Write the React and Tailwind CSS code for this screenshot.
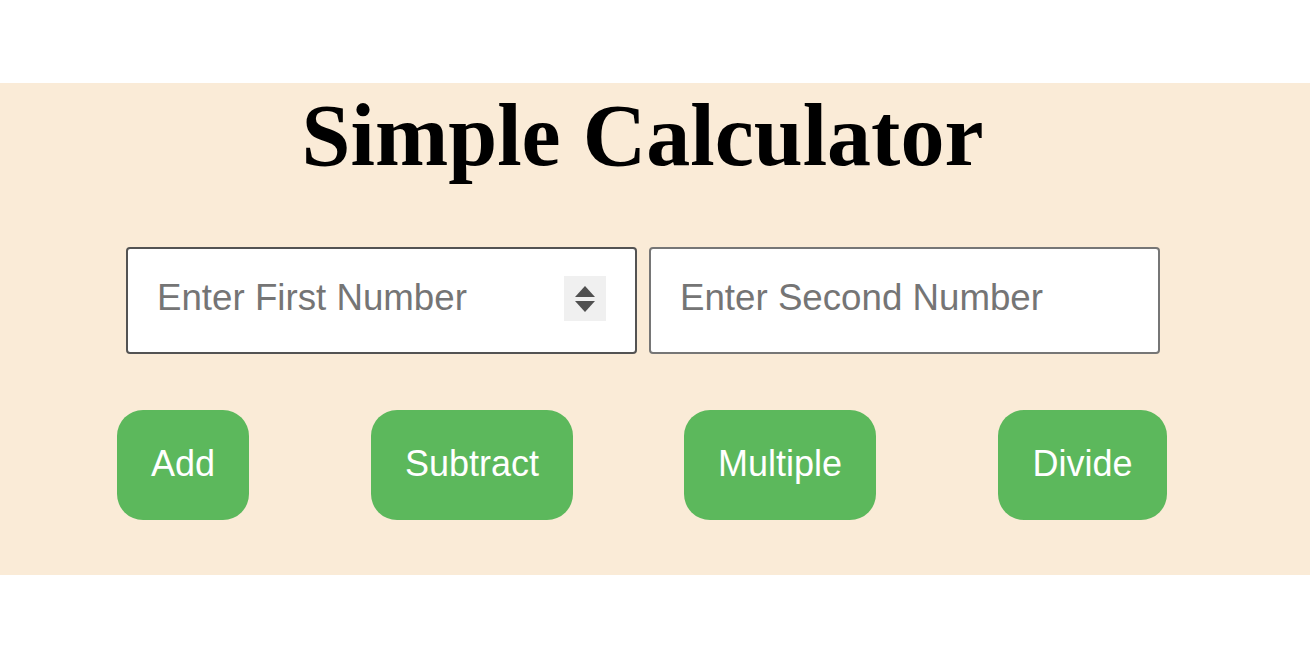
import React from 'react';

const buttons = [
    { label: 'Add', width: 'w-[132px]' },
    { label: 'Subtract', width: 'w-[202px]' },
    { label: 'Multiple', width: 'w-[192px]' },
    { label: 'Divide', width: 'w-[169px]' },
];

const SpinBox = () => (
    <div className="absolute right-[31px] top-[29px] w-[42px] h-[45px] bg-[#f0f0f0] flex items-center justify-center">
        <svg width="22" height="32" viewBox="0 0 22 32">
            <polygon points="11,3 21,14 1,14" fill="#505050" />
            <polygon points="1,18 21,18 11,29" fill="#505050" />
        </svg>
    </div>
);

const App = () => {
    return (
        <div className="w-[1310px] h-[672px] bg-white pt-[83px] font-['Liberation_Sans',Arial,sans-serif]">
            <div className="bg-[#faebd7] h-[492px] flex flex-col">
                <h1 className="text-center text-[88px] leading-[101px] font-bold text-black pt-[2px] pr-[25px] font-['Liberation_Serif','Times_New_Roman',serif]">
                    Simple Calculator
                </h1>
                <div className="flex mt-[61px] pl-[126px] gap-[12px]">
                    <div className="relative">
                        <input
                            type="text"
                            placeholder="Enter First Number"
                            className="w-[511px] h-[107px] bg-white border-2 border-[#535353] rounded-[4px] pl-[29px] pb-[6px] text-[36.7px] text-black placeholder:text-[#757575] outline-none"
                        />
                        <SpinBox />
                    </div>
                    <input
                        type="text"
                        placeholder="Enter Second Number"
                        className="w-[511px] h-[107px] bg-white border-2 border-[#767676] rounded-[4px] pl-[29px] pb-[6px] text-[36.7px] text-black placeholder:text-[#757575] outline-none"
                    />
                </div>
                <div className="flex mt-[56px] pl-[117px]">
                    {buttons.map((b, i) => (
                        <button
                            key={b.label}
                            className={`${b.width} h-[110px] rounded-[26px] bg-[#5cb85c] text-white text-[36px] pb-[2px] ${i === 1 ? 'ml-[122px]' : ''} ${i === 2 ? 'ml-[111px]' : ''} ${i === 3 ? 'ml-[122px]' : ''}`}
                        >
                            {b.label}
                        </button>
                    ))}
                </div>
            </div>
        </div>
    );
};

export default App;
